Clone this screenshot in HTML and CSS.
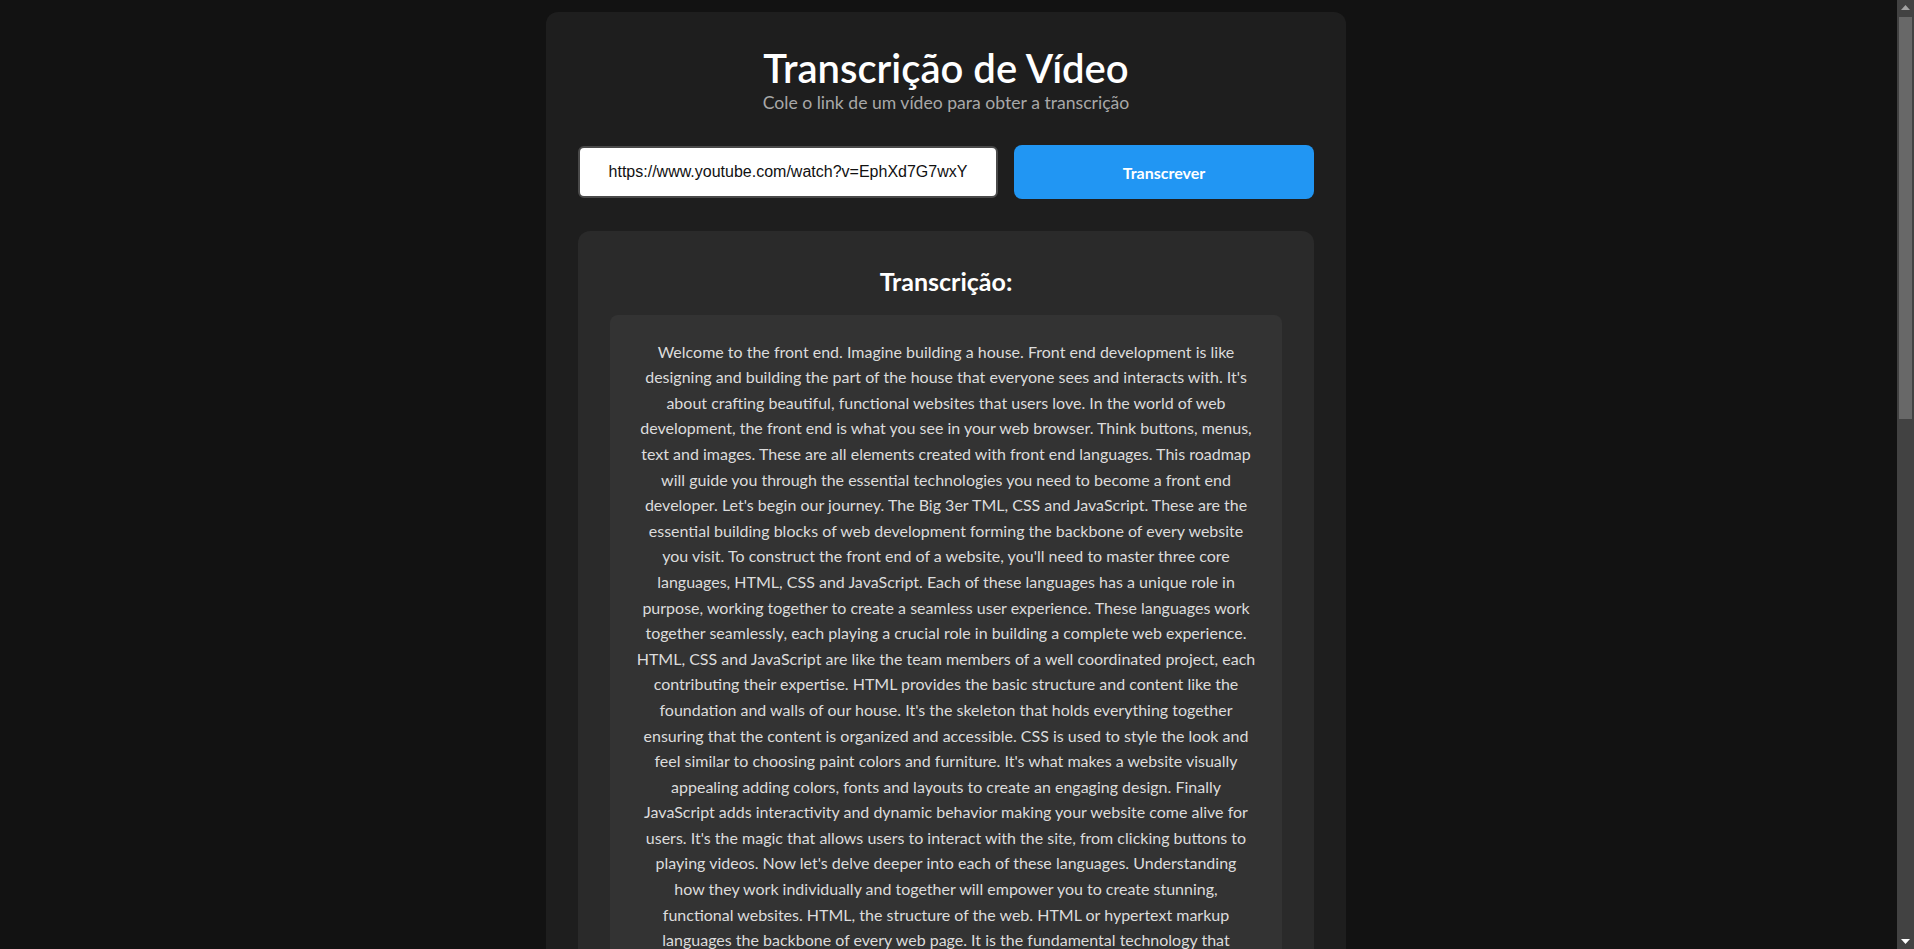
FILE: index.html
```html
<!DOCTYPE html>
<html lang="pt-BR">
<head>
<meta charset="utf-8">
<title>Transcrição de Vídeo</title>
<link rel="stylesheet" href="styles.css">
</head>
<body>
<div class="viewport">
<main class="card">
  <header class="head">
    <h1 class="title">Transcrição de Vídeo</h1>
    <p class="subtitle">Cole o link de um vídeo para obter a transcrição</p>
  </header>
  <form class="form">
    <input class="url" type="text" value="https://www.youtube.com/watch?v=EphXd7G7wxY">
    <button class="btn" type="button">Transcrever</button>
  </form>
  <section class="result">
    <h2 class="result-title">Transcrição:</h2>
    <div class="transcript">
      <p class="text">Welcome to the front end. Imagine building a house. Front end development is like<br>
designing and building the part of the house that everyone sees and interacts with. It's<br>
about crafting beautiful, functional websites that users love. In the world of web<br>
development, the front end is what you see in your web browser. Think buttons, menus,<br>
text and images. These are all elements created with front end languages. This roadmap<br>
will guide you through the essential technologies you need to become a front end<br>
developer. Let's begin our journey. The Big 3er TML, CSS and JavaScript. These are the<br>
essential building blocks of web development forming the backbone of every website<br>
you visit. To construct the front end of a website, you'll need to master three core<br>
languages, HTML, CSS and JavaScript. Each of these languages has a unique role in<br>
purpose, working together to create a seamless user experience. These languages work<br>
together seamlessly, each playing a crucial role in building a complete web experience.<br>
HTML, CSS and JavaScript are like the team members of a well coordinated project, each<br>
contributing their expertise. HTML provides the basic structure and content like the<br>
foundation and walls of our house. It's the skeleton that holds everything together<br>
ensuring that the content is organized and accessible. CSS is used to style the look and<br>
feel similar to choosing paint colors and furniture. It's what makes a website visually<br>
appealing adding colors, fonts and layouts to create an engaging design. Finally<br>
JavaScript adds interactivity and dynamic behavior making your website come alive for<br>
users. It's the magic that allows users to interact with the site, from clicking buttons to<br>
playing videos. Now let's delve deeper into each of these languages. Understanding<br>
how they work individually and together will empower you to create stunning,<br>
functional websites. HTML, the structure of the web. HTML or hypertext markup<br>
languages the backbone of every web page. It is the fundamental technology that<br>
defines the content and structure of a website. HTML uses a system of tags and elements to describe the different parts of a page, such as headings, paragraphs, links, images and forms. Think of HTML as the blueprint of our house. It tells the browser what each part of the page is and how it relates to the rest.</p>
    </div>
  </section>
</main>
</div>
<aside class="scrollbar" aria-hidden="true">
  <span class="arrow">
    <svg width="9" height="5" viewBox="0 0 9 5"><path d="M0 5 L4.5 0 L9 5 Z" fill="#a3a3a3"/></svg>
  </span>
  <div class="track"><div class="thumb"></div></div>
  <span class="arrow">
    <svg width="9" height="5" viewBox="0 0 9 5"><path d="M0 0 L9 0 L4.5 5 Z" fill="#ffffff"/></svg>
  </span>
</aside>
</body>
</html>
```

FILE: styles.css
```css
* {
  box-sizing: border-box;
}

html,
body {
  height: 100%;
}

body {
  margin: 0;
  display: flex;
  overflow: hidden;
  background: #121212;
  color: #e0e0e0;
  font-family: Lato, "Open Sans", "Noto Sans", sans-serif;
}

.viewport {
  flex: 1;
  min-width: 0;
  overflow: hidden;
  padding: 12px 5px 12px 0;
}

.card {
  width: 800px;
  margin: 0 auto;
  padding: 32px;
  background: #1e1e1e;
  border-radius: 12px;
  text-align: center;
}

.head {
  display: flex;
  flex-direction: column;
  align-items: center;
}

.title {
  margin: 0;
  font-size: 40px;
  font-weight: 600;
  line-height: 1.2;
  color: #ffffff;
}

.subtitle {
  margin: 0;
  font-size: 17.6px;
  line-height: 1.2;
  color: #a8a8a8;
}

.form {
  display: flex;
  gap: 16px;
  margin-top: 32px;
}

.url {
  flex: 1;
  height: 52px;
  margin-top: 1px;
  padding: 0 12px;
  border: 2px solid #4a4a4a;
  border-radius: 6px;
  background: #ffffff;
  color: #111111;
  font-family: "Liberation Sans", Arial, sans-serif;
  font-size: 16px;
  text-align: center;
}

.btn {
  width: 300px;
  height: 54px;
  border: none;
  border-radius: 8px;
  background: #2196f3;
  color: #ffffff;
  font-family: Lato, "Open Sans", sans-serif;
  font-size: 16px;
  font-weight: 700;
}

.result {
  margin-top: 32px;
  padding: 34px 32px 32px;
  background: #2a2a2a;
  border-radius: 12px;
}

.result-title {
  margin: 0 0 17px;
  font-size: 25px;
  line-height: 1.3;
  font-weight: 700;
  color: #ffffff;
}

.transcript {
  padding: 24px;
  background: #333333;
  border-radius: 8px;
}

.text {
  margin: 0;
  font-size: 16px;
  line-height: 1.6;
  color: #dcdcdc;
}

.scrollbar {
  flex: none;
  width: 17px;
  height: 100%;
  display: flex;
  flex-direction: column;
  background: #424242;
}

.arrow {
  flex: none;
  height: 15px;
  display: flex;
  align-items: center;
  justify-content: center;
}

.track {
  flex: 1;
  padding: 2px 2px 0;
}

.thumb {
  height: 402px;
  background: #686868;
}
```
